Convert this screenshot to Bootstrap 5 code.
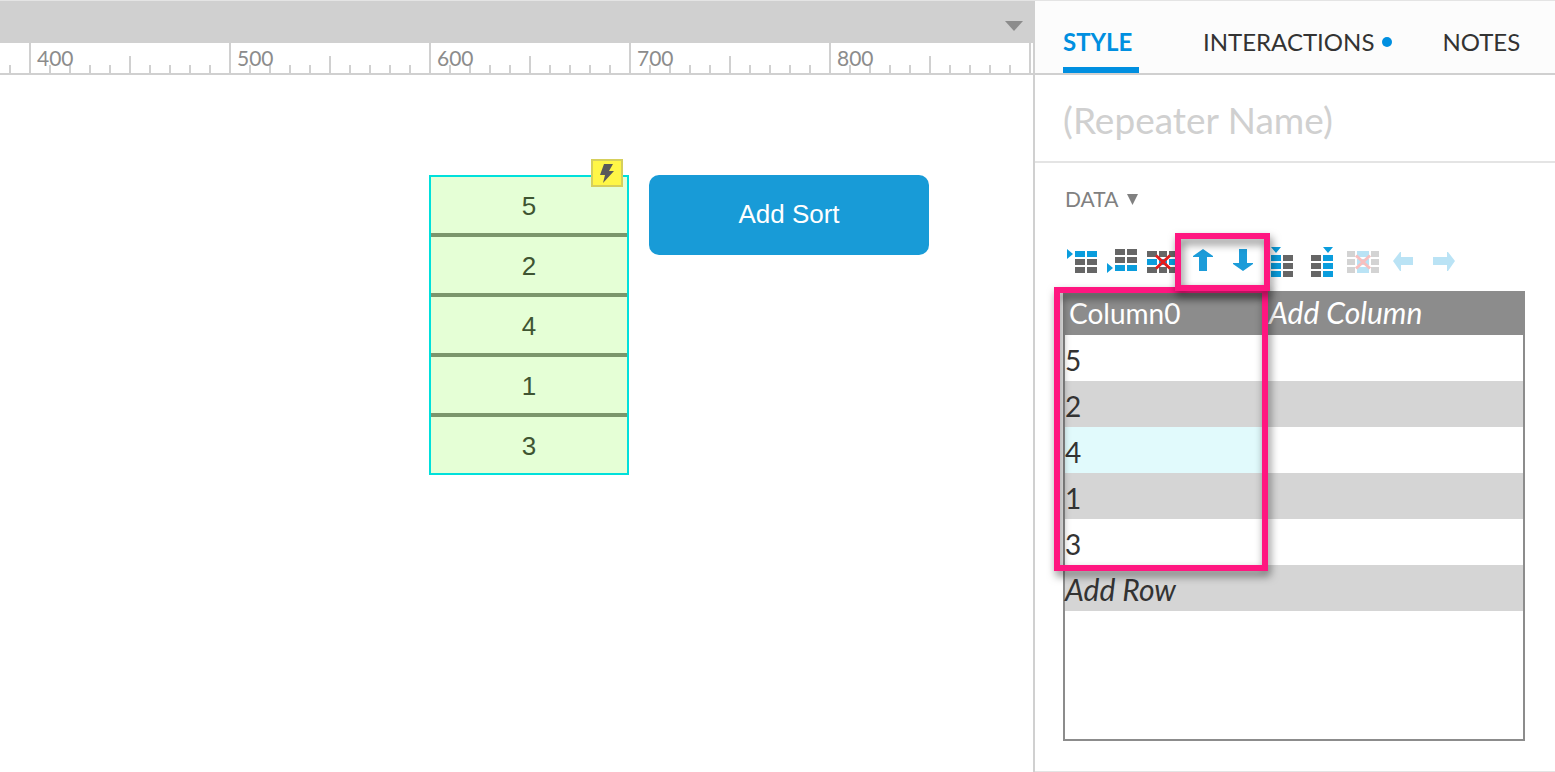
<!DOCTYPE html>
<html lang="en">
<head>
<meta charset="utf-8">
<meta name="viewport" content="width=device-width, initial-scale=1">
<title>Repeater editor</title>
<link href="https://cdn.jsdelivr.net/npm/bootstrap@5.3.0/dist/css/bootstrap.min.css" rel="stylesheet">
<style>
  :root { --line: #d0d0d0; --ink: #333; --accent: #008fe0; --pink: #ff1680; --grid: #8c8c8c; }
  body { font-family: Lato, sans-serif; color: var(--ink); background: #fff; border-top: 1px solid #e4e4e4; }
  .workspace { min-width: 0; }
  .topbar { height: 42px; background: var(--line); padding-right: 8px; }
  .topbar button { width: 22px; height: 20px; margin-top: 8px; }
  /* Ruler: major tick every 200px, half tick midway, minor tick every 20px */
  .ruler {
    height: 32px; padding-left: 37px; border-bottom: 2px solid var(--line);
    color: #8c8c8c; font-size: 21px; line-height: 29px;
    background:
      repeating-linear-gradient(90deg, var(--line) 0 2px, transparent 2px 200px) 29px 0 / 200px 30px repeat-x,
      repeating-linear-gradient(90deg, var(--line) 0 2px, transparent 2px 200px) 129px 13px / 200px 17px repeat-x,
      repeating-linear-gradient(90deg, var(--line) 0 2px, transparent 2px 20px) 9px 22px / 20px 8px repeat-x;
  }
  .ruler span { flex: 0 0 200px; }
  .artboard { padding: 100px 20px 20px 429px; gap: 20px; font-family: "Liberation Sans", sans-serif; font-size: 26px; }
  .repeater { width: 200px; border: 2px solid #00e0db; background: #e5ffd6; color: #3f5532; }
  .repeater li { height: 60px; line-height: 58px; border-bottom: 4px solid #7b966c; text-align: center; }
  .repeater li:last-child { height: 56px; border-bottom: 0; }
  .bolt { top: -16px; right: 6px; width: 32px; height: 28px; background: #fff647; border: 2px solid #d6cf5c; }
  .sort-btn { width: 280px; height: 80px; border-radius: 10px; background: #189bd7; color: #fff; font-size: 26px; padding: 0 0 2px; }
  .sort-btn:hover { background: #1489c0; color: #fff; }
  .inspector { flex: 0 0 522px; border-left: 2px solid var(--line); }
  .inspector-body { border-bottom: 1px solid #e4e4e4; }
  .tabs { height: 74px; padding-left: 28px; background: #fcfcfc; border-bottom: 2px solid var(--line); font-size: 24px; gap: 64px; }
  .tabs a { color: var(--ink); text-decoration: none; padding-top: 16px; border-bottom: 6px solid transparent; white-space: nowrap; }
  .tabs a.active { color: var(--accent); border-color: var(--accent); font-weight: 700; width: 76px; }
  .tabs .last-tab { margin-left: -14px; }
  .dot { width: 10px; height: 10px; background: var(--accent); margin-left: 8px; }
  .name-row { height: 88px; border-bottom: 2px solid #e4e4e4; }
  .name-row input { height: 86px; padding: 2px 28px 0; border: 0; outline: 0; font-size: 37px; width: 100%; background: transparent; color: inherit; }
  .name-row input::placeholder { color: var(--line); opacity: 1; }
  .data-head { padding: 25px 0 0 30px; height: 51px; }
  .data-head button { color: #808080; font-size: 21px; line-height: 22px; gap: 9px; }
  .tools { padding: 27px 28px 0; height: 77px; }
  .tool { width: 40px; height: 40px; padding: 4px; line-height: 0; }
  .tool:disabled { opacity: .28; border: 0; }
  .tool svg { width: 32px; height: 32px; display: block; }
  .blue { fill: #0a9ddd; }
  .gray { fill: #666; }
  .cross { stroke: #e51c1c; stroke-width: 3; fill: none; }
  .callout { border: 6px solid var(--pink); filter: drop-shadow(2px 5px 4px rgba(0,0,0,.5)); pointer-events: none; }
  .callout-tools { inset: -8px -7px -10px -8px; }
  .callout-col { left: -11px; top: -4px; width: 214px; height: 284px; }
  .sheet { margin: 0 30px 30px 28px; height: 450px; border: 2px solid var(--grid); border-top: 0; }
  .sheet table { font-size: 28px; table-layout: fixed; width: 100%; }
  .sheet em { font-size: 30px; line-height: 40px; }
  .sheet th { height: 44px; line-height: 44px; background: var(--grid); color: #fff; font-weight: 400; padding: 0 4px; }
  .sheet th:first-child { width: 200px; }
  .sheet td { height: 46px; padding: 4px 0 0; line-height: 42px; }
  .sheet tbody tr:nth-child(even) { background: #d5d5d5; }
  .sheet td.picked { background: #e1fafc; }
</style>
</head>
<body>
<svg width="0" height="0" class="position-absolute" aria-hidden="true">
  <defs><path id="cells" d="M8 0h10v6H8zM20 0h10v6H20z"/></defs>
</svg>
<div class="d-flex align-items-stretch">
  <main class="workspace flex-grow-1 overflow-hidden">
    <div class="topbar d-flex justify-content-end align-items-center">
      <button class="btn p-0 border-0 d-flex align-items-center justify-content-center" type="button" aria-label="Open tab list">
        <svg width="18" height="10" viewBox="0 0 18 10"><path d="M0 0h18L9 10z" fill="#8c8c8c"/></svg>
      </button>
    </div>
    <div class="ruler d-flex overflow-hidden"><span>400</span><span>500</span><span>600</span><span>700</span><span>800</span></div>
    <div class="artboard d-flex align-items-start">
      <div class="position-relative flex-shrink-0">
        <ul class="repeater list-unstyled m-0">
          <li>5</li><li>2</li><li>4</li><li>1</li><li>3</li>
        </ul>
        <div class="bolt position-absolute d-flex align-items-center justify-content-center">
          <svg width="14" height="19" viewBox="0 0 14 19"><path d="M4 0h9L9 7h5L3 19l2-8H0z" fill="#5a5a5a"/></svg>
        </div>
      </div>
      <button class="sort-btn btn border-0 flex-shrink-0" type="button">Add Sort</button>
    </div>
  </main>

  <aside class="inspector d-flex flex-column">
    <nav class="tabs d-flex" aria-label="Inspector">
      <a class="active d-flex align-items-center" href="#style" aria-current="page">STYLE</a>
      <a class="d-flex align-items-center" href="#interactions">INTERACTIONS<span class="dot rounded-circle"></span></a>
      <a class="last-tab d-flex align-items-center" href="#notes">NOTES</a>
    </nav>
    <div class="inspector-body flex-grow-1">
      <div class="name-row"><input type="text" placeholder="(Repeater Name)" aria-label="Repeater name"></div>
      <div class="data-head"><button class="btn p-0 border-0 d-flex align-items-center" type="button">DATA
        <svg width="11" height="11" viewBox="0 0 11 11"><path d="M0 0h11L5.500 11z" fill="#808080"/></svg></button></div>
      <div class="tools d-flex align-items-start">
        <button class="tool btn border-0" type="button" aria-label="Add row above"><svg viewBox="0 0 32 32"><path class="blue" d="M0 4l6 5-6 5z"/><use href="#cells" y="6" class="blue"/><use href="#cells" y="14" class="gray"/><use href="#cells" y="22" class="gray"/></svg></button>
        <button class="tool btn border-0" type="button" aria-label="Add row below"><svg viewBox="0 0 32 32"><path class="blue" d="M0 18l6 5-6 5z"/><use href="#cells" y="4" class="gray"/><use href="#cells" y="12" class="gray"/><use href="#cells" y="20" class="blue"/></svg></button>
        <button class="tool btn border-0" type="button" aria-label="Delete row"><svg viewBox="0 0 32 32"><path class="gray" d="M0 6h10v6H0zM12 6h8v6h-8zM22 6h10v6H22zM0 22h10v6H0zM12 22h8v6h-8zM22 22h10v6H22z"/><path class="blue" d="M0 14h10v6H0zM12 14h8v6h-8zM22 14h10v6H22z"/><path class="cross" d="M9 10.500l14 13M23 10.500l-14 13"/></svg></button>
        <div class="d-flex position-relative z-1">
          <button class="tool btn border-0" type="button" aria-label="Move row up"><svg viewBox="0 0 32 32"><path fill="#1c9cd9" d="M16 4l10 7v1h-6v14h-8V12H6v-1z"/></svg></button>
          <button class="tool btn border-0" type="button" aria-label="Move row down"><svg viewBox="0 0 32 32"><path fill="#1c9cd9" d="M12 4h8v14h6v1l-10 7-10-7v-1h6z"/></svg></button>
          <div class="callout callout-tools position-absolute"></div>
        </div>
        <button class="tool btn border-0" type="button" aria-label="Add column left"><svg viewBox="0 0 32 32"><path class="blue" d="M4 2h10L9 8zM4 10h10v6H4zM4 18h10v6H4zM4 26h10v6H4z"/><path class="gray" d="M16 10h10v6H16zM16 18h10v6H16zM16 26h10v6H16z"/></svg></button>
        <button class="tool btn border-0" type="button" aria-label="Add column right"><svg viewBox="0 0 32 32"><path class="gray" d="M4 10h10v6H4zM4 18h10v6H4zM4 26h10v6H4z"/><path class="blue" d="M16 2h10l-5 6zM16 10h10v6H16zM16 18h10v6H16zM16 26h10v6H16z"/></svg></button>
        <button class="tool btn" type="button" disabled aria-label="Delete column"><svg viewBox="0 0 32 32"><path class="gray" d="M0 6h8v6H0zM0 14h8v6H0zM0 22h8v6H0zM24 6h8v6h-8zM24 14h8v6h-8zM24 22h8v6h-8z"/><path class="blue" d="M10 6h12v6H10zM10 14h12v6H10zM10 22h12v6H10z"/><path class="cross" d="M9 10.500l14 13M23 10.500l-14 13"/></svg></button>
        <button class="tool btn" type="button" disabled aria-label="Move column left"><svg viewBox="0 0 32 32"><path class="blue" d="M6 16l7-9h1v5h12v8H14v6h-1z"/></svg></button>
        <button class="tool btn" type="button" disabled aria-label="Move column right"><svg viewBox="0 0 32 32"><path class="blue" d="M28 16l-7-9h-1v5H6v8h14v6h1z"/></svg></button>
      </div>
      <div class="sheet position-relative">
        <table>
          <thead><tr><th scope="col">Column0</th><th scope="col"><em>Add Column</em></th></tr></thead>
          <tbody>
            <tr><td>5</td><td></td></tr>
            <tr><td>2</td><td></td></tr>
            <tr><td class="picked">4</td><td></td></tr>
            <tr><td>1</td><td></td></tr>
            <tr><td>3</td><td></td></tr>
            <tr><td><em>Add Row</em></td><td></td></tr>
          </tbody>
        </table>
        <div class="callout callout-col position-absolute"></div>
      </div>
    </div>
  </aside>
</div>
<script src="https://cdn.jsdelivr.net/npm/bootstrap@5.3.0/dist/js/bootstrap.bundle.min.js"></script>
</body>
</html>
